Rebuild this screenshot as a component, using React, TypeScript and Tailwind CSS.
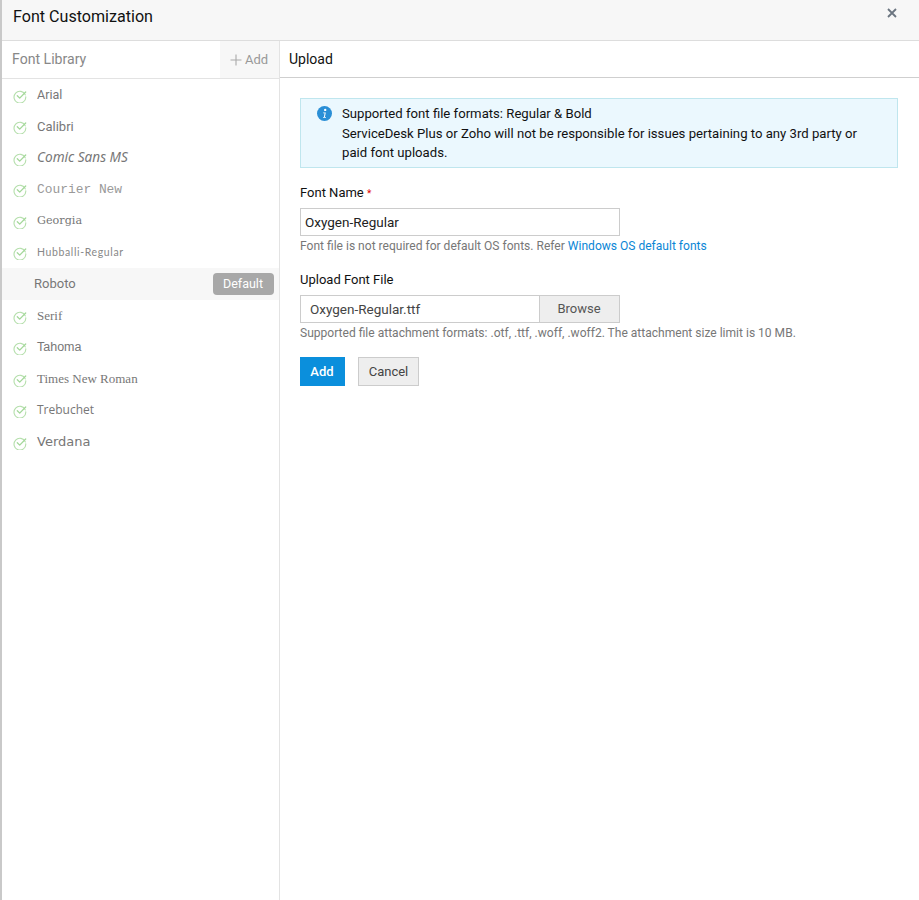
import React from "react";

const CheckIcon = () => (
  <svg width="14" height="14" viewBox="0 0 15 15" fill="none" className="mt-[1.5px] shrink-0">
    <path d="M13.2 6.3A6.3 6.3 0 1 0 13.7 8.4" stroke="#b5dfac" strokeWidth="1.2" strokeLinecap="round" />
    <path d="M4.6 7.2 L7.2 9.8 L13.6 3.2" stroke="#a4d89a" strokeWidth="1.4" strokeLinecap="round" strokeLinejoin="round" />
  </svg>
);

const fonts: { name: string; cls: string }[] = [
  { name: "Arial", cls: "mt-[1px] font-['Roboto',sans-serif] text-[12.5px]" },
  { name: "Calibri", cls: "font-['Roboto',sans-serif] text-[13px]" },
  { name: "Comic Sans MS", cls: "-mt-[1px] font-['Noto_Sans',sans-serif] italic text-[13.6px]" },
  { name: "Courier New", cls: "font-['Liberation_Mono',monospace] text-[12.9px] text-[#999]" },
  { name: "Georgia", cls: "mt-[2px] font-['DejaVu_Serif',serif] text-[11.2px]" },
  { name: "Hubballi-Regular", cls: "mt-[2px] font-['Lato',sans-serif] text-[10.5px] tracking-[0.62px] text-[#888]" },
];
const fonts2: { name: string; cls: string }[] = [
  { name: "Serif", cls: "font-['Liberation_Serif',serif] text-[13px]" },
  { name: "Tahoma", cls: "font-['Liberation_Sans',sans-serif] text-[12.5px]" },
  { name: "Times New Roman", cls: "font-['Liberation_Serif',serif] text-[13px]" },
  { name: "Trebuchet", cls: "font-['Open_Sans',sans-serif] text-[12px]" },
  { name: "Verdana", cls: "font-['DejaVu_Sans',sans-serif] text-[13px]" },
];

const Row = ({ name, cls }: { name: string; cls: string }) => (
  <div className="flex h-[31.5px] items-center pl-[10.5px]">
    <CheckIcon />
    <span className={`ml-[10.5px] text-[#777] ${cls}`}>{name}</span>
  </div>
);

export default function App() {
  return (
    <div className="flex h-[900px] w-[919px] flex-col overflow-hidden border-l-2 border-[#c9c9c9] bg-white font-['Roboto',sans-serif]">
      <div className="flex h-[41px] shrink-0 justify-between border-b border-[#dddddd] bg-[#f7f7f7]">
        <div className="pl-[11px] pt-[7px] text-[16.1px] leading-[20px] text-[#111]">Font Customization</div>
        <svg width="10" height="10" viewBox="0 0 10 10" className="mr-[22px] mt-[8px]">
          <path d="M1 1 L9 9 M9 1 L1 9" stroke="#6b7580" strokeWidth="1.8" />
        </svg>
      </div>
      <div className="flex min-h-0 flex-1">
        <div className="w-[278px] shrink-0 border-r border-[#e3e3e3]">
          <div className="flex h-[38px] justify-between border-b border-[#e3e3e3]">
            <div className="pl-[10px] pt-[9px] text-[14.1px] leading-[18px] text-[#888]">Font Library</div>
            <div className="flex h-[37px] w-[59px] items-center justify-center gap-[3px] bg-[#f7f7f7] pr-[1px] text-[13px] text-[#999]">
              <svg width="12" height="12" viewBox="0 0 12 12">
                <path d="M6 0.5 V11.5 M0.5 6 H11.5" stroke="#aaa" strokeWidth="1.1" />
              </svg>
              Add
            </div>
          </div>
          {fonts.map((f) => (
            <Row key={f.name} {...f} />
          ))}
          <div className="flex h-[32px] items-center justify-between bg-[#f7f7f7] pl-[32px] pr-[5px]">
            <span className="text-[13px] text-[#777]">Roboto</span>
            <span className="flex h-[22px] w-[61px] items-center justify-center rounded-[4px] bg-[#a8a8a8] pr-[1px] text-[12.5px] text-white">
              Default
            </span>
          </div>
          {fonts2.map((f) => (
            <Row key={f.name} {...f} />
          ))}
        </div>
        <div className="min-w-0 flex-1">
          <div className="flex h-[37px] items-center border-b border-[#cfcfcf] pl-[9px] text-[14px] text-[#111]">Upload</div>
          <div className="px-[20px] pt-[20px]">
            <div className="flex h-[70px] w-[598px] border border-[#bfe6ee] bg-[#ebf8fe] pl-[16px] pt-[5px]">
              <svg width="15" height="15" viewBox="0 0 15 15" className="mt-[2px] shrink-0">
                <circle cx="7.5" cy="7.5" r="7.5" fill="#2a8fd6" />
                <circle cx="8.2" cy="3.9" r="1.2" fill="#fff" />
                <path d="M6.2 6.4 H8.8 L7.9 10.9 H9 L8.9 11.7 H6 L6.1 10.9 H6.9 L7.6 7.2 H6.1 Z" fill="#fff" />
              </svg>
              <div className="ml-[10px] w-[530px] text-[13.15px] leading-[19.5px] text-[#111]">
                Supported font file formats: Regular &amp; Bold
                <br />
                ServiceDesk Plus or Zoho will not be responsible for issues pertaining to any 3rd party or paid font uploads.
              </div>
            </div>
            <div className="mt-[15px] h-[20px] text-[13px] leading-[20px] text-[#111]">
              Font Name <span className="text-[10px] leading-none text-[#e00000]">*</span>
            </div>
            <div className="mt-[5px] flex h-[28px] w-[320px] items-center border border-[#cccccc] pl-[4px] text-[13.5px] text-[#222]">
              Oxygen-Regular
            </div>
            <div className="mt-[1px] text-[12.05px] leading-[18px] text-[#777]">
              Font file is not required for default OS fonts. Refer <span className="text-[#0a86d6]">Windows OS default fonts</span>
            </div>
            <div className="mt-[15px] text-[13px] leading-[20px] text-[#111]">Upload Font File</div>
            <div className="mt-[5px] flex h-[28px] w-[320px] border border-[#cccccc] text-[13.5px]">
              <div className="flex flex-1 items-center pl-[9px] text-[#444]">Oxygen-Regular.ttf</div>
              <div className="flex w-[80px] items-center justify-center border-l border-[#cccccc] bg-[#eeeeee] pb-[1px] pr-[1px] text-[13px] text-[#555]">
                Browse
              </div>
            </div>
            <div className="mt-[1px] text-[12.05px] leading-[18px] text-[#777]">
              Supported file attachment formats: .otf, .ttf, .woff, .woff2. The attachment size limit is 10 MB.
            </div>
            <div className="mt-[15px] flex gap-[13px]">
              <div className="flex h-[29px] w-[45px] items-center justify-center bg-[#0b8fdc] pr-[1px] text-[13px] font-medium text-white">Add</div>
              <div className="flex h-[29px] w-[61px] items-center justify-center border border-[#cccccc] bg-[#eeeeee] text-[13px] text-[#444]">Cancel</div>
            </div>
          </div>
        </div>
      </div>
    </div>
  );
}
